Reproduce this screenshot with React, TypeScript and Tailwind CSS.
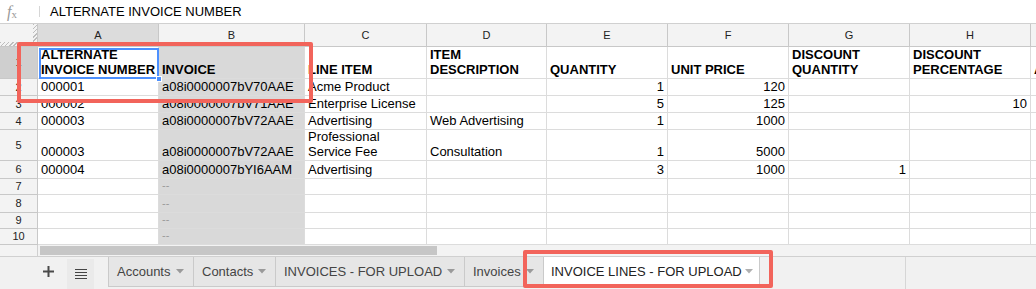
type Value = string | string[];

const COLS = ["A", "B", "C", "D", "E", "F", "G", "H", "I"];

const ROWS: Value[][] = [
  [
    ["ALTERNATE", "INVOICE NUMBER"],
    "INVOICE",
    "LINE ITEM",
    ["ITEM", "DESCRIPTION"],
    "QUANTITY",
    "UNIT PRICE",
    ["DISCOUNT", "QUANTITY"],
    ["DISCOUNT", "PERCENTAGE"],
    ["", "AMOUNT"],
  ],
  ["000001", "a08i0000007bV70AAE", "Acme Product", "", "1", "120", "", "", ""],
  ["000002", "a08i0000007bV71AAE", "Enterprise License", "", "5", "125", "", "10", ""],
  ["000003", "a08i0000007bV72AAE", "Advertising", "Web Advertising", "1", "1000", "", "", ""],
  ["000003", "a08i0000007bV72AAE", ["Professional", "Service Fee"], "Consultation", "1", "5000", "", "", ""],
  ["000004", "a08i0000007bYI6AAM", "Advertising", "", "3", "1000", "1", "", ""],
  ["", "--", "", "", "", "", "", "", ""],
  ["", "--", "", "", "", "", "", "", ""],
  ["", "--", "", "", "", "", "", "", ""],
  ["", "--", "", "", "", "", "", "", ""],
];

const TABS = [
  { name: "Accounts", width: "w-[85px]" },
  { name: "Contacts", width: "w-[82px]" },
  { name: "INVOICES - FOR UPLOAD", width: "w-[189px]" },
  { name: "Invoices", width: "w-[79px]" },
];

const hatch =
  "bg-[repeating-linear-gradient(135deg,#bdbdbd_0px,#bdbdbd_1px,#f3f3f3_1px,#f3f3f3_3px)]";

const Caret = ({ color = "#9a9a9a" }: { color?: string }) => (
  <svg width="8" height="5" viewBox="0 0 8 5">
    <path d="M0 0 L8 0 L4 4.5 Z" fill={color} />
  </svg>
);

const DataCell = ({ value, col, row }: { value: Value; col: number; row: number }) => {
  const lines = Array.isArray(value) ? value : [value];
  const right = col >= 4 && row > 0;
  const dash = value === "--";
  const selected = row === 0 && col === 0;

  return (
    <div
      className={
        "border-r border-b border-[#dcdcdc] flex flex-col justify-end px-[3px] pb-[1px] whitespace-nowrap text-[13px] leading-[15px] " +
        (col === 1 ? "bg-[#d9d9d9] " : "bg-white ") +
        (right ? "items-end " : "items-start ") +
        (row === 0 ? "font-bold text-black " : "text-black ") +
        (selected ? "relative overflow-visible z-10" : "overflow-hidden")
      }
    >
      {lines.map((line, i) => (
        <span key={i} className={dash ? "text-[#9a9a9a] text-[11px]" : ""}>
          {line || "\u00a0"}
        </span>
      ))}
      {selected && (
        <>
          <div className="absolute left-[1px] top-[1px] right-[-1px] bottom-[-1px] border-2 border-[#4d90fe]" />
          <div className="absolute right-[-4px] bottom-[-4px] w-[6px] h-[6px] bg-[#4d90fe] border border-white" />
        </>
      )}
    </div>
  );
};

const App = () => {
  return (
    <div className="relative w-[1036px] h-[289px] overflow-hidden bg-white font-['Liberation_Sans',Arial,sans-serif]">
      {/* formula bar */}
      <div className="h-[24px] flex items-center border-b border-[#d0d0d0] bg-white">
        <div className="w-[39px] pl-[7px] flex items-end text-[#9a9a9a] font-['Liberation_Serif',serif] italic">
          <span className="text-[16px] leading-[16px]">f</span>
          <span className="text-[11px] leading-[11px] not-italic">x</span>
        </div>
        <div className="w-px h-[11px] bg-[#d6d6d6]" />
        <div className="pl-[10px] text-[13px] text-black">ALTERNATE INVOICE NUMBER</div>
      </div>

      {/* sheet grid */}
      <div className="grid grid-cols-[38px_121px_146px_122px_120px_121px_121px_121px_121px_121px] grid-rows-[23px_32px_17px_17px_17px_31px_18px_16px_18px_16px_16px] w-[1036px] overflow-hidden">
        <div className="border-r border-b border-[#c8c8c8] bg-[#f3f3f3] flex flex-col">
          <div className="flex-1 flex">
            <div className="flex-1" />
            <div className={"w-[4px] " + hatch} />
          </div>
          <div className={"h-[4px] " + hatch} />
        </div>
        {COLS.map((c, i) => (
          <div
            key={c}
            className={
              "border-r border-b border-[#c8c8c8] flex items-center justify-center text-[11px] text-[#222] " +
              (i === 0 ? "bg-[#dcdcdc]" : "bg-[#f3f3f3]")
            }
          >
            {c}
          </div>
        ))}

        {ROWS.map((row, r) => (
          <div key={r} className="contents">
            <div
              className={
                "border-r border-b border-[#c8c8c8] flex items-center justify-center text-[11px] text-[#222] " +
                (r === 0 ? "bg-[#cfcfcf]" : "bg-[#f3f3f3]")
              }
            >
              {r + 1}
            </div>
            {row.map((v, c) => (
              <DataCell key={c} value={v} col={c} row={r} />
            ))}
          </div>
        ))}
      </div>

      {/* horizontal scroll */}
      <div className="h-[12px] flex border-b border-[#d0d0d0] bg-[#f3f3f3]">
        <div className="w-[38px] border-r border-[#d0d0d0]" />
        <div className="ml-[2px] mt-[1px] w-[397px] h-[9px] bg-[#c6c6c6]" />
      </div>

      {/* sheet tabs */}
      <div className="h-[32px] flex items-start bg-[#f1f1f1] text-[13px]">
        <svg className="ml-[43px] mt-[9px]" width="11" height="11" viewBox="0 0 11 11">
          <path d="M5.5 0 V11 M0 5.5 H11" stroke="#4a4a4a" strokeWidth="2" />
        </svg>
        <div className="ml-[13px] mt-[2px] w-[27px] h-[30px] bg-[#eaeaea] flex flex-col items-center justify-center gap-[2px]">
          <div className="w-[12px] h-px bg-[#444]" />
          <div className="w-[12px] h-px bg-[#444]" />
          <div className="w-[12px] h-px bg-[#444]" />
          <div className="w-[12px] h-px bg-[#444]" />
        </div>
        <div className="ml-[14px] flex border-l border-[#cacaca]">
          {TABS.map((t) => (
            <div
              key={t.name}
              className={
                "h-[30px] border-r border-b border-[#cacaca] bg-[#e6e6e6] flex items-center justify-between pl-[8px] pr-[9px] text-[#444] whitespace-nowrap " +
                t.width
              }
            >
              <span>{t.name}</span>
              <Caret />
            </div>
          ))}
          <div className="w-[216px] h-[30px] border-r border-b border-[#cacaca] bg-white flex items-center justify-between pl-[7px] pr-[6px] text-[#222] whitespace-nowrap">
            <span>INVOICE LINES - FOR UPLOAD</span>
            <Caret color="#b0b0b0" />
          </div>
        </div>
        <div className="ml-[145px] h-[32px] border-l border-[#d6d6d6]" />
      </div>

      {/* highlight boxes */}
      <div className="absolute left-[17px] top-[42px] w-[296px] h-[61px] border-4 border-[#f2645b] rounded-[2px] z-20" />
      <div className="absolute left-[523px] top-[250px] w-[250px] h-[38px] border-4 border-[#f2645b] rounded-[2px] z-20" />
    </div>
  );
};

export default App;
